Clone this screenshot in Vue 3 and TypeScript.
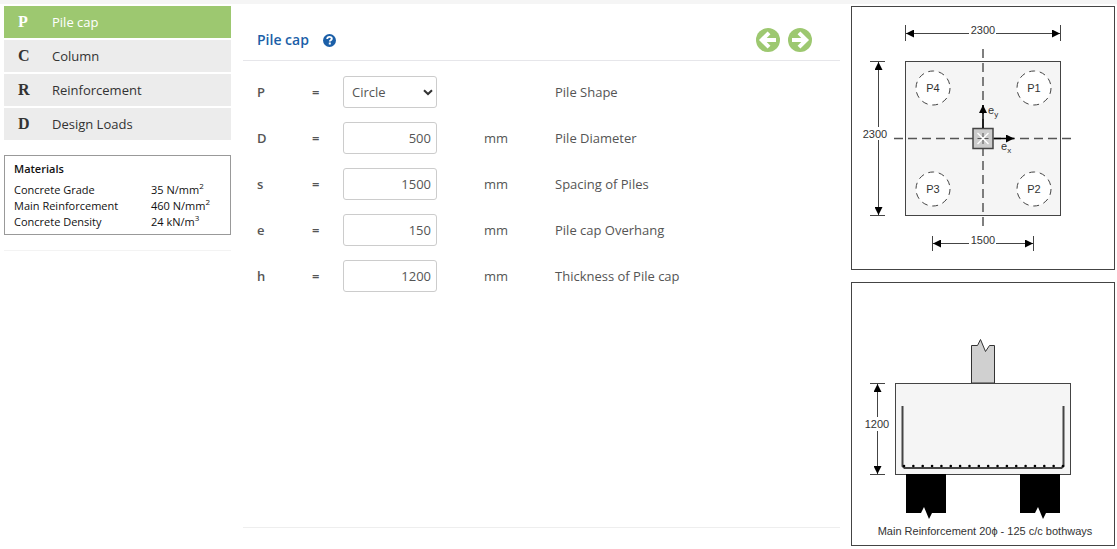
<script setup lang="ts">
import { reactive, ref } from 'vue'

interface Section { key: string; name: string }
interface Field { key: string; label: string; unit: string; value: string }

const sections: Section[] = [
  { key: 'P', name: 'Pile cap' },
  { key: 'C', name: 'Column' },
  { key: 'R', name: 'Reinforcement' },
  { key: 'D', name: 'Design Loads' },
]
const active = ref(0)

function step(by: number): void {
  active.value = Math.min(sections.length - 1, Math.max(0, active.value + by))
}

const materials = [
  { name: 'Concrete Grade', value: '35 N/mm', power: '2' },
  { name: 'Main Reinforcement', value: '460 N/mm', power: '2' },
  { name: 'Concrete Density', value: '24 kN/m', power: '3' },
]

const shape = ref('Circle')
const fields = reactive<Field[]>([
  { key: 'D', label: 'Pile Diameter', unit: 'mm', value: '500' },
  { key: 's', label: 'Spacing of Piles', unit: 'mm', value: '1500' },
  { key: 'e', label: 'Pile cap Overhang', unit: 'mm', value: '150' },
  { key: 'h', label: 'Thickness of Pile cap', unit: 'mm', value: '1200' },
])

const piles = [
  { name: 'P4', x: 81, y: 81 },
  { name: 'P1', x: 182, y: 81 },
  { name: 'P3', x: 81, y: 182 },
  { name: 'P2', x: 182, y: 182 },
]
const barCount = 18
const bars = Array.from({ length: barCount }, (_, i) => 52 + (i * 159) / (barCount - 1))
</script>

<template>
  <div class="page">
    <aside class="sidebar">
      <nav class="sections">
        <button
          v-for="(s, i) in sections"
          :key="s.key"
          type="button"
          class="section"
          :class="{ active: i === active }"
          @click="active = i"
        >
          <span class="letter">{{ s.key }}</span>
          <span>{{ s.name }}</span>
        </button>
      </nav>
      <section class="materials">
        <h2>Materials</h2>
        <table>
          <tbody>
            <tr v-for="m in materials" :key="m.name">
              <th scope="row">{{ m.name }}</th>
              <td>{{ m.value }}<sup>{{ m.power }}</sup></td>
            </tr>
          </tbody>
        </table>
      </section>
    </aside>

    <main class="content">
      <header class="heading">
        <h1>Pile cap</h1>
        <button type="button" class="icon help" aria-label="Help">
          <svg width="13" height="13" viewBox="0 0 13 13">
            <circle cx="6.5" cy="6.5" r="6.5" fill="#1b5fa8" />
            <path d="M4.200 5C4.300 3.500 5.200 2.900 6.500 2.900c1.400 0 2.300.7 2.300 1.900 0 1.400-2 1.500-2 2.700" fill="none" stroke="#fff" stroke-width="1.900" />
            <rect x="5.800" y="8.500" width="2" height="2" fill="#fff" />
          </svg>
        </button>
        <div class="steps">
          <button type="button" class="icon" aria-label="Previous" @click="step(-1)">
            <svg width="24" height="24" viewBox="0 0 24 24">
              <circle cx="12" cy="12" r="12" fill="#9dc870" />
              <path d="M20 12H7M13 4.800 5.800 12l7.200 7.200" fill="none" stroke="#fff" stroke-width="4" />
            </svg>
          </button>
          <button type="button" class="icon" aria-label="Next" @click="step(1)">
            <svg width="24" height="24" viewBox="0 0 24 24">
              <circle cx="12" cy="12" r="12" fill="#9dc870" />
              <path d="M4 12h13M11 4.800 18.200 12l-7.200 7.200" fill="none" stroke="#fff" stroke-width="4" />
            </svg>
          </button>
        </div>
      </header>

      <form class="fields" @submit.prevent>
        <div class="row">
          <span class="symbol">P</span>
          <span class="equals">=</span>
          <span class="control">
            <select id="shape" v-model="shape">
              <option>Circle</option>
              <option>Square</option>
            </select>
            <svg class="chevron" width="10" height="7" viewBox="0 0 10 7">
              <path d="M1 1.200 5 5l4-3.800" fill="none" stroke="#333" stroke-width="2" />
            </svg>
          </span>
          <span class="unit"></span>
          <label for="shape">Pile Shape</label>
        </div>
        <div v-for="f in fields" :key="f.key" class="row">
          <span class="symbol">{{ f.key }}</span>
          <span class="equals">=</span>
          <span class="control"><input :id="'field-' + f.key" v-model="f.value" type="text" inputmode="numeric" /></span>
          <span class="unit">{{ f.unit }}</span>
          <label :for="'field-' + f.key">{{ f.label }}</label>
        </div>
      </form>
    </main>

    <aside class="figures">
      <figure>
        <svg viewBox="0 0 262 262" role="img" aria-label="Plan of pile cap">
          <defs>
            <marker id="head" viewBox="0 0 8 8" refX="8" refY="4" markerWidth="8" markerHeight="8" markerUnits="userSpaceOnUse" orient="auto-start-reverse">
              <path d="M0 0 8 4 0 8z" fill="#000" />
            </marker>
          </defs>
          <rect x="53.500" y="54.500" width="155" height="154" fill="#f5f5f5" stroke="#444" />
          <g class="thin">
            <path d="M53.500 18v16M208.500 18v16M18 54.500h15M18 208.500h15M80.500 229v15M181.500 229v15" />
            <g marker-end="url(#head)">
              <path d="M117 26.500H54" />
              <path d="M144 26.500h64" />
              <path d="M26.500 120V55" />
              <path d="M26.500 133v75" />
              <path d="M117 236.500H81" />
              <path d="M144 236.500h37" />
            </g>
          </g>
          <path class="axis" d="M131 42v178M42 131.500h177" />
          <rect x="121" y="121.500" width="20" height="20" fill="#ccc" stroke="#444" stroke-width="1.500" />
          <path d="m125.500 126 11 11m0-11-11 11" stroke="#fff" stroke-width="1.300" />
          <path d="M131 126v11M125.500 131.500h11" stroke="#555" stroke-dasharray="4 3" />
          <g stroke="#000" stroke-width="1.500" marker-end="url(#head)">
            <path d="M131 121V98" />
            <path d="M142 131.500h20" />
          </g>
          <g v-for="p in piles" :key="p.name">
            <circle :cx="p.x" :cy="p.y" r="17" fill="#fff" stroke="#444" stroke-dasharray="6 4.680" />
            <text :x="p.x" :y="p.y + 4" text-anchor="middle">{{ p.name }}</text>
          </g>
          <g text-anchor="middle">
            <text x="131" y="27">2300</text>
            <text x="23" y="131">2300</text>
            <text x="131" y="237">1500</text>
          </g>
          <text x="136" y="107">e<tspan class="sub" dy="3">y</tspan></text>
          <text x="149" y="143">e<tspan class="sub" dy="3">x</tspan></text>
        </svg>
      </figure>
      <figure>
        <svg viewBox="0 0 262 262" role="img" aria-label="Section of pile cap">
          <path d="M119.500 100V62.500h6l3-6 5 12 4-6h5V100z" fill="#d0d0d0" stroke="#333" />
          <rect x="43.500" y="100.500" width="175" height="91" fill="#f5f5f5" stroke="#444" />
          <path d="M50.500 123v60l2 2h157l2-2v-60" fill="none" stroke="#444" stroke-width="2" />
          <circle v-for="x in bars" :key="x" :cx="x" cy="183" r="1.300" />
          <path id="pile" d="M54 191h40v39H80l-3 6-5-12-3 6H54z" />
          <use href="#pile" x="114" />
          <g class="thin">
            <path d="M18 100.500h15M18 191.500h15" />
            <g marker-end="url(#head)">
              <path d="M25.500 134v-33" />
              <path d="M25.500 148v43" />
            </g>
          </g>
          <text x="25" y="145" text-anchor="middle">1200</text>
          <text x="133" y="252" text-anchor="middle">Main Reinforcement 20ϕ - 125 c/c bothways</text>
        </svg>
      </figure>
    </aside>
  </div>
</template>

<style>
body {
  margin: 0;
  background: #fff;
}
</style>

<style scoped>
.page {
  display: flex;
  align-items: flex-start;
  padding: 2px 2px 0 4px;
  border-top: 4px solid #f5f5f5;
  font: 13px/20px "Open Sans", "Noto Sans", sans-serif;
  color: #555;
}
button {
  font: inherit;
  border: 0;
  cursor: pointer;
}
.sidebar {
  flex: 0 0 227px;
  padding-bottom: 15px;
  border-bottom: 1px solid #f3f3f3;
}
.sections {
  display: flex;
  flex-direction: column;
  gap: 2px;
}
.section {
  display: flex;
  align-items: center;
  height: 32px;
  padding: 0 14px;
  background: #ececec;
  color: #333;
  text-align: left;
}
.section.active {
  background: #9dc870;
  color: #fff;
}
.letter {
  width: 34px;
  font: bold 16px/20px "Liberation Serif", serif;
}
.materials {
  margin-top: 15px;
  padding: 4px 9px;
  border: 1px solid #999;
  color: #111;
  font-size: 11px;
}
.materials h2 {
  margin: 0 0 4px;
  font-size: 11px;
  line-height: 18px;
  font-weight: 600;
}
.materials table {
  width: 100%;
  border-collapse: collapse;
  line-height: 16px;
}
.materials th,
.materials td {
  padding: 0;
  font-weight: 400;
  text-align: left;
}
.materials th {
  width: 137px;
}
.materials sup {
  font-size: 8px;
  line-height: 0;
}
.content {
  flex: 1;
  min-height: 521px;
  margin: 0 11px 0 12px;
  border-bottom: 1px solid #eee;
}
.heading {
  display: flex;
  align-items: center;
  height: 40px;
  padding: 14px 28px 0 14px;
  border-bottom: 1px solid #e6e6ea;
}
.heading h1 {
  margin: 0 14px 0 0;
  font-size: 14px;
  font-weight: 600;
  color: #1b5fa8;
}
.icon {
  display: block;
  padding: 0;
  background: none;
}
.icon svg {
  display: block;
}
.steps {
  display: flex;
  gap: 8px;
  margin-left: auto;
}
.fields {
  display: flex;
  flex-direction: column;
  gap: 14px;
  padding: 15px 14px;
}
.row {
  display: grid;
  grid-template-columns: 55px 31px 94px 118px 1fr;
  align-items: center;
}
.symbol,
.equals {
  font-weight: 600;
}
.control {
  position: relative;
}
.unit {
  padding-left: 47px;
}
input,
select {
  box-sizing: border-box;
  display: block;
  width: 100%;
  height: 32px;
  padding: 0 5px;
  border: 1px solid #ccc;
  border-radius: 3px;
  background: #fff;
  font: inherit;
  color: inherit;
  text-align: right;
}
select {
  appearance: none;
  padding: 0 8px;
  text-align: left;
}
.chevron {
  position: absolute;
  right: 4px;
  top: 13px;
  pointer-events: none;
}
.figures {
  flex: 0 0 264px;
}
figure {
  margin: 0 0 12px;
  border: 1px solid #444;
}
figure svg {
  display: block;
  width: 100%;
}
figure text {
  font: 11px "Liberation Sans", Arial, sans-serif;
  fill: #333;
}
figure .sub {
  font-size: 8px;
}
.thin {
  stroke: #444;
  stroke-width: 1;
}
.axis {
  stroke: #555;
  stroke-width: 1.5;
  stroke-dasharray: 9 5;
}
</style>
